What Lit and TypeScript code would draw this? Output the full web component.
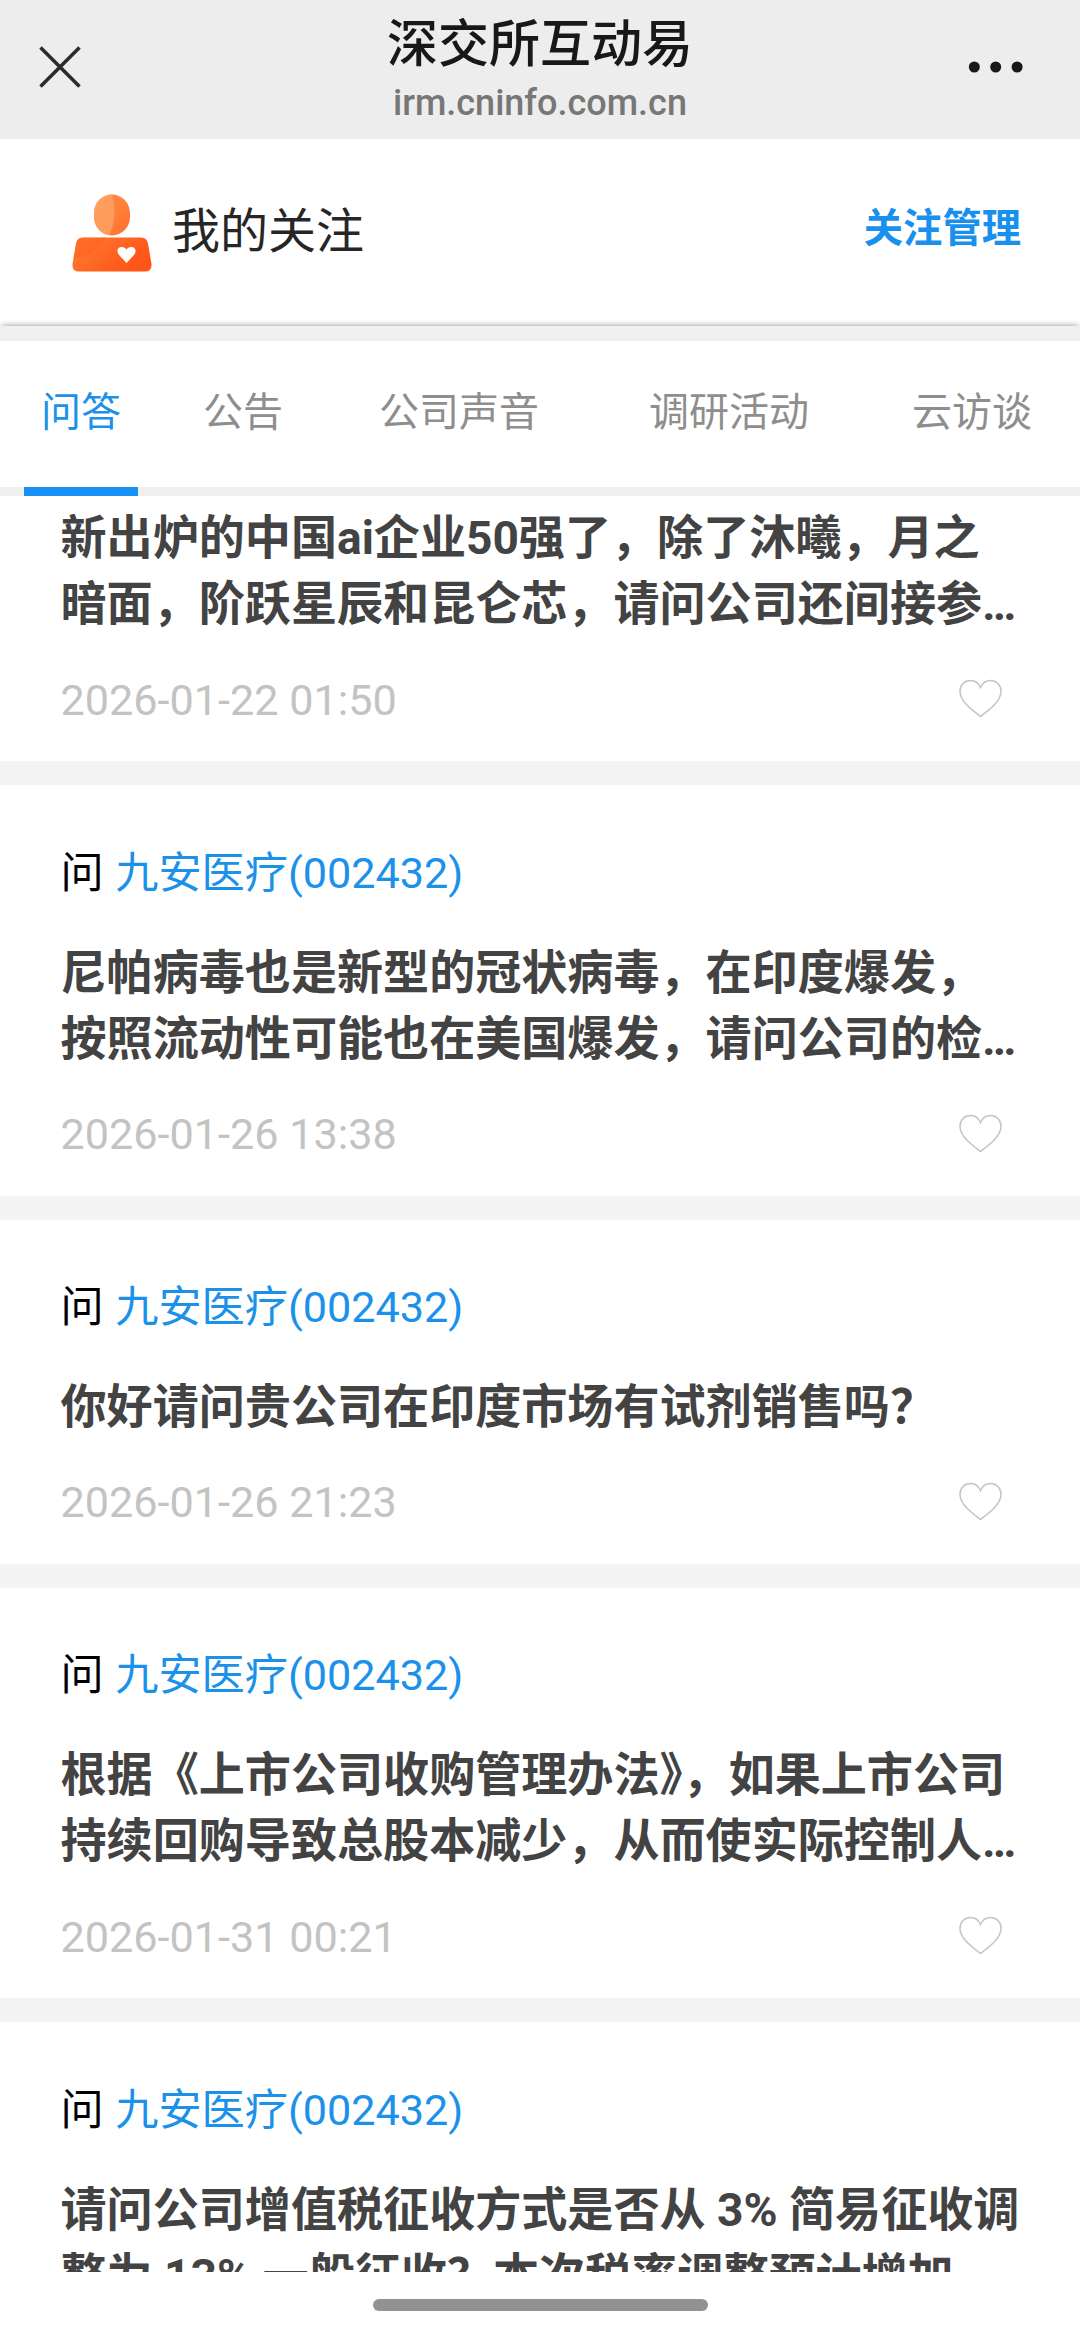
import { LitElement, html, css, svg, nothing } from "lit";
import { customElement, property } from "lit/decorators.js";

interface Question {
  company?: string;
  lines: string[];
  time: string;
}

const COMPANY = "九安医疗(002432)";

const QUESTIONS: Question[] = [
  {
    lines: ["新出炉的中国ai企业50强了，除了沐曦，月之", "暗面，阶跃星辰和昆仑芯，请问公司还间接参…"],
    time: "2026-01-22 01:50",
  },
  {
    company: COMPANY,
    lines: ["尼帕病毒也是新型的冠状病毒，在印度爆发，", "按照流动性可能也在美国爆发，请问公司的检…"],
    time: "2026-01-26 13:38",
  },
  { company: COMPANY, lines: ["你好请问贵公司在印度市场有试剂销售吗？"], time: "2026-01-26 21:23" },
  {
    company: COMPANY,
    lines: ["根据《上市公司收购管理办法》，如果上市公司", "持续回购导致总股本减少，从而使实际控制人…"],
    time: "2026-01-31 00:21",
  },
  {
    company: COMPANY,
    lines: ["请问公司增值税征收方式是否从 3% 简易征收调", "整为 13% 一般征收？本次税率调整预计增加"],
    time: "",
  },
];

const TABS = ["问答", "公告", "公司声音", "调研活动", "云访谈"];

@customElement("question-card")
export class QuestionCard extends LitElement {
  @property({ attribute: false }) question!: Question;

  static styles = css`
    :host {
      display: block;
      flex: none;
    }
    .card {
      display: flex;
      flex-direction: column;
      padding: 58.3px 60px 0 60.5px;
      background: #fff;
    }
    .card.scrolled {
      padding-top: 9.2px;
    }
    .head {
      display: flex;
      gap: 11.5px;
      height: 60px;
      margin-bottom: 36px;
      font-size: 43.2px;
      line-height: 60px;
      color: #000;
      white-space: nowrap;
    }
    .company {
      color: #1c91ea;
    }
    .text {
      font-size: 46.08px;
      line-height: 66px;
      font-weight: 700;
      color: #434343;
      white-space: nowrap;
    }
    .foot {
      display: flex;
      justify-content: space-between;
      align-items: center;
      height: 60px;
      padding: 33.5px 18px 30.6px 0;
      font-size: 43.2px;
      line-height: 60px;
      color: #c3c3c3;
    }
    .heart {
      display: block;
      width: 43px;
      height: 39px;
      margin-bottom: 4px;
    }
  `;

  render() {
    const q = this.question;
    return html`<article class="card ${q.company ? "" : "scrolled"}">
      ${q.company
        ? html`<div class="head"><span>问</span><span class="company">${q.company}</span></div>`
        : nothing}
      ${q.lines.map((line) => html`<div class="text">${line}</div>`)}
      ${q.time
        ? html`<div class="foot">
            <time>${q.time}</time>
            <svg class="heart" viewBox="0 0 43 39" fill="none" stroke="#c4c4c4" stroke-width="1.5">
              <path d="M21.5 8.5C19.5 4 16 1.5 11.8 1.5C5.5 1.5 1 6 1 12.2C1 22.5 13 31 21.5 37.5C30 31 42 22.5 42 12.2C42 6 37.5 1.5 31.2 1.5C27 1.5 23.5 4 21.5 8.5Z" />
            </svg>
          </div>`
        : nothing}
    </article>`;
  }
}

@customElement("app-root")
export class AppRoot extends LitElement {
  static styles = css`
    :host {
      display: flex;
      flex-direction: column;
      width: 1080px;
      height: 2339px;
      overflow: hidden;
      background: #fff;
      font-family: Roboto, "Noto Sans CJK SC", sans-serif;
    }
    .nav {
      flex: none;
      display: grid;
      grid-template-columns: 120px 1fr 120px;
      align-items: start;
      height: 139px;
      background: #ededed;
    }
    .close {
      width: 42px;
      height: 42px;
      margin: 46px 0 0 39px;
    }
    .dots {
      width: 56px;
      height: 12px;
      margin: 61px 0 0 8px;
    }
    .titles {
      display: flex;
      flex-direction: column;
      align-items: center;
    }
    .title {
      margin-top: 10px;
      font-size: 51px;
      line-height: 70px;
      font-weight: 500;
      color: #181818;
    }
    .url {
      font-size: 36px;
      line-height: 47px;
      color: #777;
      font-weight: 500;
    }
    .profile {
      flex: none;
      display: flex;
      align-items: center;
      height: 187px;
      padding: 0 59px 0 72px;
      box-sizing: border-box;
    }
    .avatar {
      width: 80px;
      height: 79px;
      margin-top: 1px;
    }
    .mine {
      margin-left: 20px;
      margin-bottom: 12px;
      font-size: 48px;
      color: #262626;
    }
    .manage {
      margin-left: auto;
      margin-bottom: 16px;
      font-size: 39.3px;
      font-weight: 700;
      color: #1890ee;
    }
    .strip {
      flex: none;
      height: 15px;
      background: #f0f0f0;
      box-shadow: 0 -2px 6px -2px rgba(0, 0, 0, 0.45);
    }
    .tabs {
      flex: none;
      display: grid;
      grid-template-columns: 15% 15% 25% 25% 20%;
      height: 155px;
      background: linear-gradient(#fff 146px, #f0f0f0 146px);
      position: relative;
    }
    .tab {
      display: flex;
      flex-direction: column;
      align-items: center;
      font-size: 40px;
      line-height: 60px;
      padding-top: 42px;
      color: #8e8e8e;
    }
    .tab.active {
      color: #1c91ea;
    }
    .ink {
      width: 114px;
      height: 9px;
      margin-top: 44px;
      background: #1890f5;
    }
    .feed {
      flex: 1;
      min-height: 0;
      display: flex;
      flex-direction: column;
      gap: 24px;
      overflow: hidden;
      background: #f4f4f4;
    }
    .gesture {
      flex: none;
      display: flex;
      justify-content: center;
      height: 67px;
      background: #fff;
    }
    .handle {
      width: 335px;
      height: 12px;
      margin-top: 27px;
      border-radius: 6px;
      background: #929292;
    }
  `;

  private avatar() {
    return svg`
      <defs>
        <linearGradient id="head" x1="0" y1="0" x2="1" y2="1">
          <stop offset="0" stop-color="#ff9248" />
          <stop offset="1" stop-color="#ff6f2c" />
        </linearGradient>
        <linearGradient id="body" x1="0" y1="0" x2="1" y2="0.5">
          <stop offset="0" stop-color="#ff8136" />
          <stop offset="0.7" stop-color="#ff5f1e" />
          <stop offset="1" stop-color="#ff5518" />
        </linearGradient>
      </defs>
      <rect x="22" y="0.500" width="36" height="41" rx="18" ry="18.5" fill="url(#head)" />
      <path d="M40 0.500C30 0.500 22 8 22 18.5V22C22 33 29 40.500 37 41.300C43 30 44 13 40 0.500Z" fill="#ffa265" opacity=".8" />
      <path d="M11 43.500H69Q75 43.500 76 49.500L79.500 70Q80 77.500 73 77.500H7Q0 77.500 .5 70L4 49.500Q5 43.500 11 43.500Z" fill="url(#body)" />
      <path d="M11 43.500H34C28 54 16 63 1.500 65L4 49.500Q5 43.500 11 43.500Z" fill="#ff5a1c" opacity=".4" />
      <path d="M54.500 69L47.500 61.500C43.500 57 46 53 49.500 53C52 53 53.500 54 54.500 55.800C55.500 54 57 53 59.500 53C63 53 65.500 57 61.500 61.500Z" fill="#fff" />`;
  }

  render() {
    return html`
      <header class="nav">
        <svg class="close" viewBox="0 0 42 42" stroke="#2b2b2b" stroke-width="3.6">
          <path d="M1.500 1.500L40.500 40.500M40.500 1.500L1.500 40.500" />
        </svg>
        <div class="titles">
          <div class="title">深交所互动易</div>
          <div class="url">irm.cninfo.com.cn</div>
        </div>
        <svg class="dots" viewBox="0 0 56 12" fill="#181818">
          <circle cx="6.300" cy="6" r="5.500" /><circle cx="27.700" cy="6" r="5.500" /><circle cx="49.100" cy="6" r="5.500" />
        </svg>
      </header>
      <section class="profile">
        <svg class="avatar" viewBox="0 0 80 79">${this.avatar()}</svg>
        <span class="mine">我的关注</span>
        <span class="manage">关注管理</span>
      </section>
      <div class="strip"></div>
      <nav class="tabs">
        ${TABS.map(
          (tab, i) => html`<div class="tab ${i === 0 ? "active" : ""}">
            <span>${tab}</span>${i === 0 ? html`<span class="ink"></span>` : nothing}
          </div>`,
        )}
      </nav>
      <main class="feed">
        ${QUESTIONS.map((q) => html`<question-card .question=${q}></question-card>`)}
      </main>
      <footer class="gesture"><div class="handle"></div></footer>
    `;
  }
}
